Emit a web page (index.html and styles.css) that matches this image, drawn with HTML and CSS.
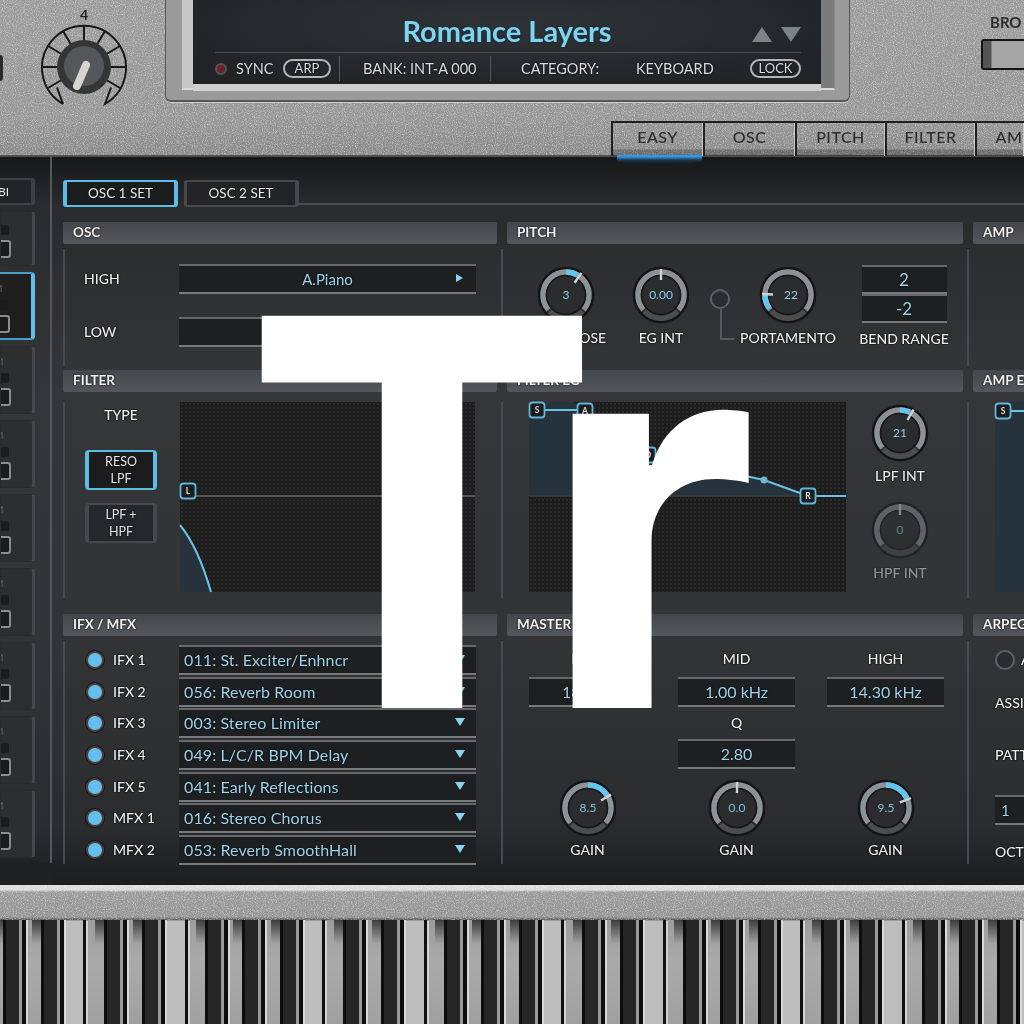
FILE: index.html
```html
<!DOCTYPE html>
<html lang="en">
<head>
  <meta charset="UTF-8" />
  <title>Romance Layers</title>
  <link rel="stylesheet" href="styles.css">
</head>
<body>

  <!-- shared svg parts -->
  <svg class="defs" width="0" height="0">
    <filter id="noise">
      <feTurbulence type="fractalNoise" baseFrequency="0.9" numOctaves="2" seed="4" />
      <feColorMatrix type="matrix" values="0 0 0 0 1  0 0 0 0 1  0 0 0 0 1  1.1 0 0 0 -0.48" />
    </filter>
    <symbol id="dial" viewBox="0 0 60 60">
      <circle cx="30" cy="30" r="27" fill="none" stroke="#131415" stroke-width="2.5" />
      <path d="M12.4 44.8A23 23 0 1 1 47.6 44.8" fill="none" stroke="#8d9295" stroke-width="5.5" />
      <path d="M13.6 46.4A23 23 0 0 0 46.4 46.4" fill="none" stroke="#4b4d4f" stroke-width="5.5" />
      <circle cx="30" cy="30" r="19.5" fill="#2b2c2e" stroke="#151617" stroke-width="1.6" />
    </symbol>
    <g id="octave">
      <rect x="58" y="1" width="20" height="104" fill="#bdbdbd" />
      <rect x="195" y="1" width="20" height="104" fill="#bdbdbd" />
      <rect x="56" y="1" width="2" height="104" fill="#dedede" />
      <rect x="193" y="1" width="2" height="104" fill="#dedede" />
      <rect x="78" y="0" width="3" height="104" fill="#111" />
      <rect x="215" y="0" width="3" height="104" fill="#111" />
      <rect x="218" y="1" width="2" height="104" fill="#d2d2d2" />
      <rect x="81" y="1" width="2" height="104" fill="#d2d2d2" />
      <g id="blackKey">
        <rect x="-12" y="0" width="12" height="24" fill="url(#keyShade)" />
        <rect x="-3" y="0" width="3" height="104" fill="#0d0d0d" />
        <rect x="0" y="0" width="13" height="104" fill="#262626" />
        <rect x="13" y="0" width="3" height="104" fill="#9a9a9a" />
        <rect x="16" y="0" width="4" height="104" fill="#0e0e0e" />
        <rect x="20" y="0" width="2" height="104" fill="#d8d8d8" />
      </g>
      <use href="#blackKey" x="38" />
      <use href="#blackKey" x="101" />
      <use href="#blackKey" x="138" />
      <use href="#blackKey" x="176" />
    </g>
    <linearGradient id="keyShade" x1="0" y1="0" x2="0" y2="1">
      <stop offset="0" stop-color="#000" stop-opacity=".6" />
      <stop offset="1" stop-color="#000" stop-opacity="0" />
    </linearGradient>
  </svg>

  <div class="synth">

    <div class="top">
      <svg class="grain"><rect width="100%" height="100%" filter="url(#noise)" /></svg>
      <div class="top-row">
        <div class="hw-edge"></div>
        <div class="hw-knob">
          <span class="hw-value">4</span>
          <svg width="88" height="88" viewBox="-44 -44 88 88">
            <path d="M-21 37A42 42 0 1 1 21 37L27 20.5M-21 37L-27 20.5" fill="none" stroke="#17181a" stroke-width="2" />
            <path d="M-26 0H-41M-22.5 -13L-36 -21M-13 -22.5L-21 -36M0 -26V-41M13 -22.5L21 -36M22.5 -13L36 -21M26 0H41M22.5 13L36 21M-22.5 13L-36 21" stroke="#17181a" stroke-width="2" />
            <circle r="27" fill="#333537" />
            <circle r="20" cy="-1" fill="#55575a" />
            <path d="M2 -2L-7 19" stroke="#d6d5cd" stroke-width="8" stroke-linecap="round" />
          </svg>
        </div>

        <div class="bezel">
          <div class="bezel-in">
            <div class="screen">
              <div class="title-row">
                <div class="title">Romance Layers</div>
                <div class="arrows">
                  <span class="arrow-up"></span>
                  <span class="arrow-down"></span>
                </div>
              </div>
              <div class="info">
                <span class="led-red"></span>
                <span class="sync">SYNC</span>
                <span class="pill pill-arp">ARP</span>
                <span class="bank">BANK: INT-A 000</span>
                <span class="category">CATEGORY:</span>
                <span class="keyboard">KEYBOARD</span>
                <span class="pill pill-lock">LOCK</span>
              </div>
            </div>
          </div>
        </div>

        <div class="bro">
          <span>BRO</span>
          <div class="bro-btn"></div>
        </div>
      </div>

      <div class="tabs">
        <div class="tab tab-on">EASY</div>
        <div class="tab">OSC</div>
        <div class="tab tab-sm">PITCH</div>
        <div class="tab tab-sm">FILTER</div>
        <div class="tab tab-end">AM</div>
      </div>
    </div>

    <div class="rack">
      <div class="side">
        <div class="bi">BI</div>
        <div class="slot slot-first"><i class="block"></i><i class="square"></i></div>
        <div class="slot slot-on"><b>M</b><i class="block"></i><i class="square"></i></div>
        <div class="slot"><b>M</b><i class="block"></i><i class="square"></i></div>
        <div class="slot"><b>M</b><i class="block"></i><i class="square"></i></div>
        <div class="slot"><b>M</b><i class="block"></i><i class="square"></i></div>
        <div class="slot"><b>M</b><i class="block"></i><i class="square"></i></div>
        <div class="slot"><b>M</b><i class="block"></i><i class="square"></i></div>
        <div class="slot"><b>M</b><i class="block"></i><i class="square"></i></div>
        <div class="slot"><b>M</b><i class="block"></i><i class="square"></i></div>
      </div>

      <div class="main">
        <div class="osc-tabs">
          <div class="osc-btn osc-btn-on">OSC 1 SET</div>
          <div class="osc-btn">OSC 2 SET</div>
          <div class="osc-line"></div>
        </div>

        <div class="sections">

          <!-- row 1 -->
          <section>
            <h3>OSC</h3>
            <div class="body osc-body">
              <span class="label">HIGH</span>
              <div class="field field-center">A.Piano<span class="arrow-right"></span></div>
              <span class="label">LOW</span>
              <div class="field"></div>
            </div>
          </section>

          <section>
            <h3>PITCH</h3>
            <div class="body body-out pitch-body">
              <div class="knob">
                <svg width="60" height="60" viewBox="0 0 60 60">
                  <use href="#dial" width="60" height="60" />
                  <path d="M30 7A23 23 0 0 1 41.5 10.1" class="blue" />
                  <path d="M38.6 17.7L45.5 7.9" class="tick" />
                  <text x="30" y="34">3</text>
                </svg>
                <span class="label">TRANSPOSE</span>
              </div>
              <div class="knob">
                <svg width="60" height="60" viewBox="0 0 60 60">
                  <use href="#dial" width="60" height="60" />
                  <path d="M30 15V4" class="tick" />
                  <text x="30" y="34">0.00</text>
                </svg>
                <span class="label">EG INT</span>
              </div>
              <div class="link">
                <span class="link-dot"></span>
                <span class="link-line"></span>
              </div>
              <div class="knob knob-wide">
                <svg width="60" height="60" viewBox="0 0 60 60">
                  <use href="#dial" width="60" height="60" />
                  <path d="M11.2 43.2A23 23 0 0 1 7 30" class="blue" />
                  <path d="M15 29.5L4 29" class="tick" />
                  <text x="33" y="34">22</text>
                </svg>
                <span class="label">PORTAMENTO</span>
              </div>
              <div class="bend">
                <div class="field field-center field-lg">2</div>
                <div class="field field-center field-lg">-2</div>
                <span class="label">BEND RANGE</span>
              </div>
            </div>
          </section>

          <section>
            <h3>AMP</h3>
            <div class="body body-out"></div>
          </section>

          <!-- row 2 -->
          <section>
            <h3>FILTER</h3>
            <div class="body body-mid filter-body">
              <div class="type">
                <span class="label">TYPE</span>
                <div class="type-btn type-on">RESO<br>LPF</div>
                <div class="type-btn">LPF +<br>HPF</div>
              </div>
              <div class="graph">
                <svg width="295" height="190" viewBox="0 0 295 190">
                  <path d="M0 123Q18 145 31 190H0Z" fill="#27333c" />
                  <path d="M14 94H295" stroke="#66686a" stroke-width="1.5" />
                  <path d="M0 123Q18 145 31 190" class="line" />
                  <g class="node" transform="translate(8 89)">
                    <rect x="-7.5" y="-7.5" width="15" height="15" rx="3" />
                    <text y="3">L</text>
                  </g>
                </svg>
              </div>
            </div>
          </section>

          <section>
            <h3>FILTER EG</h3>
            <div class="body body-mid body-out env-body">
              <div class="graph env-graph">
                <svg width="317" height="190" viewBox="0 0 317 190">
                  <path d="M0 0H45L119 53L235 78L279 94H0Z" fill="#27333c" />
                  <path d="M0 94H317" stroke="#3c3e40" stroke-width="1.5" />
                  <path d="M8 8H56L119 53L235 78L279 94H317" class="line" />
                  <circle cx="235" cy="78" r="3.5" fill="#6fb6d2" />
                  <g class="node" transform="translate(8 8)">
                    <rect x="-7.5" y="-7.5" width="15" height="15" rx="3" />
                    <text y="3">S</text>
                  </g>
                  <g class="node" transform="translate(56 9)">
                    <rect x="-7.5" y="-7.5" width="15" height="15" rx="3" />
                    <text y="3">A</text>
                  </g>
                  <g class="node" transform="translate(119 53)">
                    <rect x="-7.5" y="-7.5" width="15" height="15" rx="3" />
                    <text y="3">D</text>
                  </g>
                  <g class="node" transform="translate(279 94)">
                    <rect x="-7.5" y="-7.5" width="15" height="15" rx="3" />
                    <text y="3">R</text>
                  </g>
                </svg>
              </div>
              <div class="env-knobs">
                <div class="knob">
                  <svg width="60" height="60" viewBox="0 0 60 60">
                    <use href="#dial" width="60" height="60" />
                    <path d="M30 7A23 23 0 0 1 39.7 9.2" class="blue" />
                    <path d="M37.5 17L43.5 6.6" class="tick" />
                    <text x="30" y="34">21</text>
                  </svg>
                  <span class="label">LPF INT</span>
                </div>
                <div class="knob knob-dim">
                  <svg width="60" height="60" viewBox="0 0 60 60">
                    <use href="#dial" width="60" height="60" />
                    <path d="M30 15V4" class="tick" />
                    <text x="30" y="34">0</text>
                  </svg>
                  <span class="label">HPF INT</span>
                </div>
              </div>
            </div>
          </section>

          <section>
            <h3>AMP E</h3>
            <div class="body body-mid body-out amp-body">
              <div class="amp-graph">
                <svg width="40" height="190" viewBox="0 0 40 190">
                  <path d="M8 9H40" class="line" />
                  <g class="node" transform="translate(8 9)">
                    <rect x="-7.5" y="-7.5" width="15" height="15" rx="3" />
                    <text y="3">S</text>
                  </g>
                </svg>
              </div>
            </div>
          </section>

          <!-- row 3 -->
          <section>
            <h3>IFX / MFX</h3>
            <div class="body body-low fx-body">
              <div class="fx-row"><i class="led"></i><span class="label">IFX 1</span><div class="field fx-field">011: St. Exciter/Enhncr<span class="arrow-drop"></span></div></div>
              <div class="fx-row"><i class="led"></i><span class="label">IFX 2</span><div class="field fx-field">056: Reverb Room<span class="arrow-drop"></span></div></div>
              <div class="fx-row"><i class="led"></i><span class="label">IFX 3</span><div class="field fx-field">003: Stereo Limiter<span class="arrow-drop"></span></div></div>
              <div class="fx-row"><i class="led"></i><span class="label">IFX 4</span><div class="field fx-field">049: L/C/R BPM Delay<span class="arrow-drop"></span></div></div>
              <div class="fx-row"><i class="led"></i><span class="label">IFX 5</span><div class="field fx-field">041: Early Reflections<span class="arrow-drop"></span></div></div>
              <div class="fx-row"><i class="led"></i><span class="label">MFX 1</span><div class="field fx-field">016: Stereo Chorus<span class="arrow-drop"></span></div></div>
              <div class="fx-row"><i class="led"></i><span class="label">MFX 2</span><div class="field fx-field">053: Reverb SmoothHall<span class="arrow-drop"></span></div></div>
            </div>
          </section>

          <section>
            <h3>MASTER EQ</h3>
            <div class="body body-low body-out eq-body">
              <span class="label">LOW</span>
              <span class="label">MID</span>
              <span class="label">HIGH</span>
              <div class="field field-center field-md">180 Hz</div>
              <div class="field field-center field-md">1.00 kHz</div>
              <div class="field field-center field-md">14.30 kHz</div>
              <span class="label eq-q">Q</span>
              <div class="field field-center field-md eq-q-val">2.80</div>
              <svg class="eq-knob" width="60" height="60" viewBox="0 0 60 60">
                <use href="#dial" width="60" height="60" />
                <path d="M30 7A23 23 0 0 1 49.9 18.5" class="blue" />
                <path d="M43 22.5L53 16.5" class="tick" />
                <text x="30" y="34">8.5</text>
              </svg>
              <svg class="eq-knob" width="60" height="60" viewBox="0 0 60 60">
                <use href="#dial" width="60" height="60" />
                <path d="M30 15V4" class="tick" />
                <text x="30" y="34">0.0</text>
              </svg>
              <svg class="eq-knob" width="60" height="60" viewBox="0 0 60 60">
                <use href="#dial" width="60" height="60" />
                <path d="M30 7A23 23 0 0 1 50.8 20.3" class="blue" />
                <path d="M43.9 24.4L55 20" class="tick" />
                <text x="30" y="34">9.5</text>
              </svg>
              <span class="label eq-gain">GAIN</span>
              <span class="label eq-gain">GAIN</span>
              <span class="label eq-gain">GAIN</span>
            </div>
          </section>

          <section>
            <h3>ARPEG</h3>
            <div class="body body-low body-out arp-body">
              <div class="arp-on"><span class="link-dot"></span><span class="label">A</span></div>
              <span class="label arp-assign">ASSI</span>
              <span class="label arp-pattern">PATT</span>
              <div class="field arp-field">1</div>
              <span class="label arp-oct">OCT</span>
            </div>
          </section>

        </div>
      </div>
    </div>

    <div class="strip">
      <svg class="grain"><rect width="100%" height="100%" filter="url(#noise)" /></svg>
    </div>

    <div class="keys">
      <svg width="1024" height="104" viewBox="0 0 1024 104">
        <use href="#octave" x="-132" />
        <use href="#octave" x="107" />
        <use href="#octave" x="346" />
        <use href="#octave" x="585" />
        <use href="#octave" x="824" />
      </svg>
    </div>
  </div>

  <!-- big white mark on top of the whole screenshot -->
  <div class="mark">Tr</div>

</body>
</html>
```

FILE: styles.css
```css
* {
  box-sizing: border-box;
}

body {
  margin: 0;
  width: 1024px;
  height: 1024px;
  overflow: hidden;
  position: relative;
  background: #222;
  font-family: 'Lato', 'Noto Sans', sans-serif;
  color: #e9e9e9;
}

.defs {
  position: absolute;
}

.synth {
  width: 1024px;
  height: 1024px;
  overflow: hidden;
  filter: blur(0.45px);
}

.grain {
  position: absolute;
  left: 0;
  top: 0;
  width: 100%;
  height: 100%;
  pointer-events: none;
}

/* top silver panel */
.top {
  position: relative;
  z-index: 1;
  height: 157px;
  background: linear-gradient(#9b9b9b, #969696 75%, #8a8a8a);
  border-bottom: 2px solid #4f5052;
}

.top-row {
  display: flex;
  height: 121px;
  position: relative;
  overflow: hidden;
}

.hw-edge {
  width: 3px;
  height: 26px;
  flex: none;
  margin-top: 55px;
  border-radius: 0 12px 12px 0;
  background: #2a2a2a;
}

.hw-knob {
  width: 88px;
  flex: none;
  margin-left: 37px;
  display: flex;
  flex-direction: column;
  align-items: center;
}

.hw-value {
  height: 20px;
  margin-top: 3px;
  font-size: 14px;
  font-weight: 700;
  line-height: 23px;
  color: #222;
}

.bezel {
  width: 685px;
  height: 102px;
  flex: none;
  margin-left: 37px;
  padding: 0 14px 10px 16px;
  background: #9a9a9a;
  border: solid #55565a;
  border-width: 0 1px 2px 1px;
  border-radius: 0 0 6px 6px;
  box-shadow: 0 1px 0 #c8c8c8;
}

.bezel-in {
  height: 90px;
  padding: 0 13px 7px 11px;
  border-bottom: 2px solid #d9d9d9;
  background: linear-gradient(to right, #c7c7c7 0, #c7c7c7 11px, #7b7b7b 11px, #7b7b7b 100%);
  border-right: 1px solid #8a8a8a;
}

.screen {
  height: 84px;
  display: flex;
  flex-direction: column;
  background: radial-gradient(ellipse at 50% 30%, #2f3338, #212326 85%);
  box-shadow: 0 7px 0 #d0d0d0;
}

.title-row {
  position: relative;
  height: 52px;
  padding-top: 10px;
  text-align: center;
}

.title {
  font-size: 29px;
  font-weight: 700;
  line-height: 42px;
  color: #7ed3ee;
  text-shadow: 0 0 2px #0f2a38;
}

.arrows {
  position: absolute;
  right: 20px;
  top: 27px;
  display: flex;
  gap: 9px;
}

.arrow-up,
.arrow-down {
  width: 0;
  height: 0;
  border-left: 10px solid transparent;
  border-right: 10px solid transparent;
}

.arrow-up {
  border-bottom: 15px solid #7a8387;
}

.arrow-down {
  border-top: 15px solid #7a8387;
}

.info {
  display: flex;
  align-items: center;
  height: 32px;
  margin: 0 20px 0 22px;
  border-top: 1px solid #4a4d50;
  font-size: 14.5px;
  color: #dcdcdc;
  text-shadow: 0 0 2px #000;
  white-space: nowrap;
}

.led-red {
  width: 12px;
  height: 12px;
  flex: none;
  border-radius: 50%;
  background: #6a2424;
  border: 2px solid #555;
}

.sync {
  margin-left: 9px;
  width: 47px;
}

.pill {
  height: 19px;
  border: 2px solid #b5b5b5;
  border-radius: 10px;
  font-size: 13px;
  line-height: 15px;
  text-align: center;
}

.pill-arp {
  width: 48px;
  margin-right: 8px;
}

.bank {
  width: 152px;
  height: 25px;
  line-height: 25px;
  padding: 0 0 0 23px;
  border-left: 1px solid #55585b;
  border-right: 1px solid #55585b;
  margin-right: 30px;
}

.category {
  width: 115px;
}

.keyboard {
  width: 114px;
}

.pill-lock {
  width: 51px;
}

.bro {
  flex: none;
  margin-left: 131px;
  padding-top: 12px;
  font-size: 15px;
  line-height: 20px;
  color: #2c2c2c;
  font-weight: 700;
  white-space: nowrap;
}

.bro span {
  padding-left: 9px;
}

.bro-btn {
  width: 60px;
  height: 31px;
  margin-top: 7px;
  border: 2px solid #151515;
  border-radius: 3px;
  background: linear-gradient(to right, #555 0, #555 8px, #a5a5a5 9px);
}

.tabs {
  display: flex;
  height: 35px;
  margin-left: 611px;
  position: relative;
  border-top: 2px solid #202020;
}

.tab {
  width: 92px;
  flex: none;
  padding-top: 2px;
  border-left: 2px solid #202020;
  border-right: 1px solid #c8c8c8;
  background: linear-gradient(transparent 78%, rgba(0, 0, 0, 0.22) 82%);
  color: #2c2c2c;
  font-size: 16px;
  font-weight: 500;
  line-height: 24px;
  letter-spacing: 0.5px;
  text-align: center;
  position: relative;
}

.tab-sm {
  width: 90px;
}

.tab-end {
  width: 49px;
  padding-left: 18px;
  overflow: hidden;
}

/* blue glow under the active tab */
.tab-on::after {
  content: '';
  position: absolute;
  left: 4px;
  right: 0;
  bottom: -8px;
  height: 9px;
  border-radius: 0 0 40% 40%;
  background: linear-gradient(#2f97e6 0, #2f97e6 20%, rgba(47, 151, 230, 0.25) 55%, transparent);
}

/* dark rack */
.rack {
  display: flex;
  height: 728px;
  padding-top: 21px;
  position: relative;
  background: linear-gradient(#17181a 0, #2a2b2d 48px, #353638 240px, #323335 500px, #2b2c2e 670px, #1c1d1f 728px);
}

.side {
  width: 52px;
  flex: none;
  border-right: 2px solid #55585a;
  margin-top: -21px;
  padding-top: 21px;
  height: 728px;
  position: relative;
}

.side::after {
  content: '';
  position: absolute;
  left: 0;
  right: -2px;
  bottom: 0;
  height: 22px;
  background: #1f2022;
}

.bi {
  width: 35px;
  height: 27px;
  border: 2px solid #3e4043;
  border-left: 0;
  border-right-width: 4px;
  border-radius: 0 3px 3px 0;
  background: #232426;
  font-size: 12px;
  line-height: 23px;
  text-indent: -2px;
  overflow: hidden;
}

.slot {
  position: relative;
  width: 35px;
  height: 68px;
  margin-top: 6px;
  border: 1px solid #2a2b2c;
  border-right: 3px solid #45484b;
  border-radius: 0 4px 4px 0;
  background: #2d2e30;
  overflow: hidden;
}

.slot-first {
  height: 55px;
}

.slot-on {
  border: 2px solid #4a9ec6;
  border-left: 0;
  border-right: 4px solid #5fc0ea;
  background: #1f1f20;
}

.slot b {
  position: absolute;
  left: -6px;
  top: 9px;
  font-size: 9px;
  font-weight: 400;
  color: #666;
}

.slot .block {
  position: absolute;
  left: 0;
  top: 26px;
  width: 8px;
  height: 10px;
  border-radius: 0 2px 2px 0;
  background: #1c1c1d;
}

.slot .square {
  position: absolute;
  left: -4px;
  top: 41px;
  width: 14px;
  height: 18px;
  border: 2px solid #8a8c8e;
  border-radius: 3px;
  background: #1b1b1c;
}

.slot-first .block {
  top: 13px;
}

.slot-first .square {
  top: 28px;
}

.main {
  flex: 1;
  min-width: 0;
  margin-left: 11px;
  overflow: hidden;
}

.osc-tabs {
  display: flex;
  gap: 6px;
  height: 29px;
  margin-top: 2px;
}

.osc-btn {
  width: 115px;
  height: 27px;
  border: 2px solid #46494c;
  border-right-width: 4px;
  border-left-width: 3px;
  border-radius: 3px;
  background: #232426;
  font-size: 13.5px;
  line-height: 23px;
  text-align: center;
  text-shadow: 0 0 2px #000;
}

.osc-btn-on {
  border: 2px solid #5bbde6;
  border-left-width: 4px;
  border-right-width: 4px;
  background: #1b1c1d;
}

.osc-line {
  flex: 1;
  height: 25px;
  margin-left: -6px;
  border-bottom: 2px solid #4a4c4f;
}

.sections {
  display: grid;
  grid-template-columns: 434px 456px 100px;
  grid-template-rows: 148px 244px 271px;
  column-gap: 10px;
  margin-top: 13px;
}

section {
  min-width: 0;
}

h3 {
  margin: 0;
  height: 22px;
  padding-left: 10px;
  border-radius: 2px;
  background: linear-gradient(#44474b, #53565a);
  font-size: 13.5px;
  font-weight: 700;
  line-height: 21px;
  color: #f1f1f1;
  text-shadow: 0 0 2px #000;
  white-space: nowrap;
  overflow: hidden;
}

.body {
  margin-top: 5px;
  border-left: 2px solid #484a4d;
  height: 117px;
}

.body-mid {
  margin-top: 10px;
  height: 196px;
}

.body-low {
  height: 223px;
}

.body-out {
  margin-left: -6px;
}

.label {
  font-size: 14px;
  font-weight: 500;
  line-height: 16px;
  color: #f0f0f0;
  text-shadow: 0 0 2px #000, 0 0 1px #000;
  white-space: nowrap;
}

.field {
  position: relative;
  height: 30px;
  border-top: 2px solid #66696c;
  border-bottom: 2px solid #77797b;
  background: #1e1f21;
  font-size: 15px;
  line-height: 26px;
  color: #9bd3ea;
  text-shadow: 0 0 2px #000;
  white-space: nowrap;
}

.field-center {
  text-align: center;
}

.field-md {
  font-size: 16px;
}

.field-lg {
  font-size: 17px;
}

.arrow-right {
  position: absolute;
  right: 13px;
  top: 8px;
  border-top: 4px solid transparent;
  border-bottom: 4px solid transparent;
  border-left: 7px solid #8ed4f0;
}

.arrow-drop {
  position: absolute;
  right: 11px;
  top: 8px;
  border-left: 5px solid transparent;
  border-right: 5px solid transparent;
  border-top: 8px solid #86d3f2;
}

/* osc */
.osc-body {
  display: grid;
  grid-template-columns: 95px 297px;
  grid-auto-rows: 29px;
  row-gap: 24px;
  padding: 15px 0 0 19px;
  align-items: center;
}

/* pitch */
.pitch-body {
  display: flex;
  padding: 16px 0 0 18px;
}

.knob {
  width: 90px;
  flex: none;
  display: flex;
  flex-direction: column;
  align-items: center;
}

.knob .label {
  margin-top: 5px;
}

.knob + .knob {
  margin-left: 5px;
}

.knob svg text,
.eq-knob text {
  font-size: 12px;
  fill: #8ccbe6;
  text-anchor: middle;
}

.knob-wide {
  width: 100px;
}

.blue {
  fill: none;
  stroke: #63c4ee;
  stroke-width: 5.5;
}

.tick {
  fill: none;
  stroke: #d2d2d2;
  stroke-width: 2.4;
}

.link {
  width: 32px;
  flex: none;
  padding: 24px 0 0 4px;
}

.link-dot {
  display: block;
  width: 20px;
  height: 20px;
  flex: none;
  border: 2px solid #5f6265;
  border-radius: 50%;
  background: #2b2c2e;
}

.link-line {
  display: block;
  width: 14px;
  height: 31px;
  margin-left: 10px;
  border-left: 2px solid #58595c;
  border-bottom: 2px solid #58595c;
}

.bend {
  width: 96px;
  flex: none;
  margin-left: 18px;
  display: flex;
  flex-direction: column;
  align-items: center;
}

.bend .field {
  width: 85px;
  height: 29px;
}

.bend .label {
  margin-top: 8px;
}

/* filter */
.filter-body {
  display: flex;
  padding: 0 0 0 20px;
}

.type {
  width: 95px;
  flex: none;
}

.type .label {
  display: block;
  margin: 5px 0 27px;
  width: 72px;
  text-align: center;
}

.type-btn {
  width: 72px;
  height: 40px;
  margin-bottom: 13px;
  padding-top: 1px;
  border: 2px solid #46494c;
  border-left-width: 4px;
  border-right-width: 4px;
  border-radius: 4px;
  background: #26272a;
  font-size: 12.5px;
  line-height: 17px;
  text-align: center;
  color: #e4e4e4;
  text-shadow: 0 0 2px #000;
}

.type-on {
  border-color: #5bbde6;
  background: #1c1c1e;
}

.graph {
  width: 295px;
  height: 190px;
  flex: none;
  background-color: #1d1d1e;
  background-image: radial-gradient(#2a2a2b 0.8px, transparent 1px);
  background-size: 4px 4px;
}

.graph svg,
.amp-graph svg {
  display: block;
  overflow: visible;
}

.line {
  fill: none;
  stroke: #69c3e4;
  stroke-width: 2;
}

.node rect {
  fill: #1b1d1f;
  stroke: #5fb7dc;
  stroke-width: 1.8;
}

.node text {
  font-size: 8.5px;
  font-weight: 700;
  fill: #dedede;
  text-anchor: middle;
}

/* env */
.env-body {
  display: flex;
  padding: 0 0 0 26px;
}

.env-graph {
  width: 317px;
}

.env-knobs {
  width: 108px;
  flex: none;
  padding: 1px 0 0 9px;
  display: flex;
  flex-direction: column;
  gap: 16px;
}

.env-knobs .knob {
  margin-left: 0;
}

.knob-dim {
  opacity: 0.5;
}

.amp-body {
  padding: 0 0 0 26px;
}

.amp-graph {
  width: 60px;
  height: 190px;
  background: #27333c;
}

/* ifx */
.fx-body {
  padding-top: 3px;
}

.fx-row {
  display: grid;
  grid-template-columns: 48px 66px 297px;
  align-items: center;
  height: 31.7px;
}

.led {
  justify-self: end;
  width: 18px;
  height: 18px;
  margin-right: 9px;
  border: 2px solid #4d4339;
  border-radius: 50%;
  background: #62bff0;
  box-shadow: 0 0 0 1px #161616;
}

.fx-field {
  padding-left: 5px;
  font-size: 16px;
  letter-spacing: 0.1px;
}

/* eq */
.eq-body {
  display: grid;
  grid-template-columns: repeat(3, 117px);
  grid-template-rows: 36px 30px 32px 30px 69px 24px;
  column-gap: 32px;
  padding-left: 26px;
  justify-items: center;
  align-items: center;
}

.eq-body .field {
  width: 117px;
}

.eq-q {
  grid-column: 2;
  grid-row: 3;
}

.eq-q-val {
  grid-column: 2;
  grid-row: 4;
}

.eq-knob {
  grid-row: 5;
  margin-top: 8px;
}

.eq-knob text {
  fill: #7fc0dc;
}

.eq-gain {
  grid-row: 6;
}

/* arp */
.arp-body {
  overflow: hidden;
  padding-left: 26px;
}

.arp-on {
  display: flex;
  align-items: center;
  gap: 6px;
  padding-top: 9px;
}

.arp-assign,
.arp-pattern,
.arp-oct {
  display: block;
}

.arp-assign {
  margin-top: 25px;
}

.arp-pattern {
  margin-top: 36px;
}

.arp-field {
  margin-top: 32px;
  width: 80px;
  padding-left: 6px;
}

.arp-oct {
  margin-top: 19px;
}

/* bottom */
.strip {
  position: relative;
  height: 35px;
  background: linear-gradient(#dcdcdc 0, #d8d8d8 5px, #9a9a9a 7px, #959595 32px, #555 35px);
}

.keys {
  height: 104px;
  background: linear-gradient(#9c9c9c, #aaaaaa 40%, #a0a0a0);
}

.keys svg {
  display: block;
}

/* the big mark is over everything */
.mark {
  position: absolute;
  left: 242px;
  top: 243px;
  font-family: 'Inter', sans-serif;
  font-size: 539px;
  font-weight: 700;
  line-height: 1;
  letter-spacing: -0.06em;
  color: #fff;
}
```
